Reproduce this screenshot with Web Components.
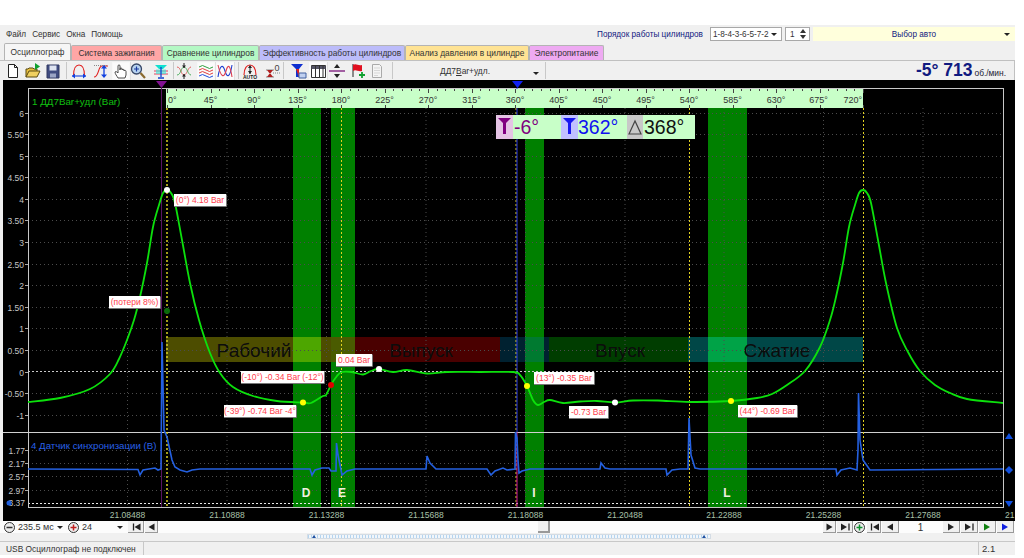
<!DOCTYPE html>
<html>
<head>
<meta charset="utf-8">
<style>
  html, body { margin: 0; padding: 0; background: #fff; }
  body { font: 8.5px "Liberation Sans", Arial, sans-serif; color: #222; overflow: hidden; }
</style>
</head>
<body>
<osc-app>
  <osc-header></osc-header>
  <osc-tabs>
    <osc-tab w="67" color="#f6f6f6" active>Осциллограф</osc-tab>
    <osc-tab w="91" color="#ffa6a6">Система зажигания</osc-tab>
    <osc-tab w="97" color="#b4f8c4">Сравнение цилиндров</osc-tab>
    <osc-tab w="146" color="#bcbcfa">Эффективность работы цилиндров</osc-tab>
    <osc-tab w="124" color="#ffe394">Анализ давления в цилиндре</osc-tab>
    <osc-tab w="75" color="#eeaaf2">Электропитание</osc-tab>
  </osc-tabs>
  <osc-toolbar>
    <osc-tool icon="new"></osc-tool>
    <osc-tool icon="open" gap="4"></osc-tool>
    <osc-tool icon="save" gap="4"></osc-tool>
    <osc-sep gap="5"></osc-sep>
    <osc-tool icon="arc" gap="4"></osc-tool>
    <osc-tool icon="slope" gap="6"></osc-tool>
    <osc-tool icon="hand" gap="4" pressed></osc-tool>
    <osc-tool icon="zoom" gap="1"></osc-tool>
    <osc-tool icon="cyan" gap="7"></osc-tool>
    <osc-sep gap="4"></osc-sep>
    <osc-tool icon="cross" gap="2"></osc-tool>
    <osc-tool icon="waves" gap="6" pressed></osc-tool>
    <osc-tool icon="loops" gap="3" pressed></osc-tool>
    <osc-sep gap="5"></osc-sep>
    <osc-tool icon="auto" gap="3"></osc-tool>
    <osc-tool icon="zero" gap="5"></osc-tool>
    <osc-sep gap="4"></osc-sep>
    <osc-tool icon="filter" gap="6"></osc-tool>
    <osc-tool icon="table" gap="4" pressed></osc-tool>
    <osc-tool icon="split" gap="3"></osc-tool>
    <osc-tool icon="flag" gap="4"></osc-tool>
    <osc-tool icon="doc" gap="4"></osc-tool>
    <osc-sep gap="7"></osc-sep>
    <osc-signal-select></osc-signal-select>
    <osc-sep></osc-sep>
    <osc-rpm></osc-rpm>
  </osc-toolbar>
  <osc-chart></osc-chart>
  <osc-transport></osc-transport>
  <osc-scrollbar></osc-scrollbar>
  <osc-status></osc-status>
</osc-app>

<script>
function shadow(el, html) {
  el.attachShadow({ mode: 'open' });
  const t = document.createElement('template');
  t.innerHTML = html;
  el.shadowRoot.appendChild(t.content.cloneNode(true));
}

const ICONS = {
  new: '<path d="M3.500 1.500h6l3 3v10h-9z" fill="#fff" stroke="#222"/><path d="M9.500 1.500v3h3" fill="none" stroke="#222"/>',
  open: '<path d="M1 14V6h2l1-1h4l1 1h3v2" fill="#e8c040" stroke="#5a4a10"/><path d="M1 14l3-6h11l-3 6z" fill="#f0d060" stroke="#5a4a10"/><path d="M10 0l5 3.500-5 3.500z" fill="#10a030"/>',
  save: '<path d="M2 2h12v13H2z" fill="#404c80" stroke="#303860"/><path d="M4.500 2.500h7v5h-7z" fill="#dfe4f0"/><path d="M5 10.500h6v4H5z" fill="#9aa4c4"/>',
  arc: '<path d="M2.500 13C2.500 5 5 2 8 2s5.500 3 5.500 11" fill="none" stroke="#e02020" stroke-width="1.100"/><path d="M1 13h14" stroke="#1040e0" stroke-width="1.100"/><path d="M1 13l3-2.500v5zM15 13l-3-2.500v5z" fill="#1040e0"/>',
  slope: '<path d="M1 14c5 0 4-11 8-11h6" fill="none" stroke="#e02020" stroke-width="1.100"/><path d="M1 2.500h14" stroke="#888" stroke-dasharray="1 1"/><path d="M11 3v11" stroke="#1040e0" stroke-width="1.300"/><path d="M11 2l-3 3.500h6zM11 15l-3-3.500h6z" fill="#1040e0"/>',
  hand: '<path d="M5 15c-1-2-3-4-3-6 1-1 2 0 3 1V3c0-1.500 2-1.500 2 0v4-1c0-1.500 2-1.500 2 0v1c0-1 2-1 2 0v1c0-1 2-1 2 .5V12l-1 3z" fill="#fff" stroke="#222" stroke-width=".8"/>',
  zoom: '<circle cx="6.500" cy="6" r="5" fill="#b8d4f0" stroke="#384868" stroke-width="1.300"/><path d="M4 6h5M6.500 3.500v5" stroke="#1a3aa0" stroke-width="1.200"/><path d="M10.500 10l4.500 5" stroke="#8a6a30" stroke-width="2.200"/>',
  cyan: '<path d="M2 2h12l-4 4H6z" fill="#10e0d0"/><path d="M1 8h14M1 11h14" stroke="#e04060" stroke-width="1"/><path d="M3 6.500h10v4.500H3z" fill="#30e8d8" opacity=".6"/><path d="M8 4v10M5 15h6" stroke="#1040d0" stroke-width="1.300"/>',
  cross: '<path d="M1 4c4 0 4 8 7 8s4-8 7-8" fill="none" stroke="#e06060"/><path d="M1 12c4 0 4-8 7-8s4 8 7 8" fill="none" stroke="#50b060"/><path d="M8 0v5M8 11v5" stroke="#222"/><path d="M8 5L6 2.500h4zM8 11l-2 2.500h4z" fill="#222"/>',
  waves: '<path d="M1 4q3.500-3 7 0t7 0" fill="none" stroke="#30a040"/><path d="M1 7q3.500-3 7 0t7 0" fill="none" stroke="#e04040"/><path d="M1 10q3.500-3 7 0t7 0" fill="none" stroke="#e04040"/><path d="M1 13q3.500-3 7 0t7 0" fill="none" stroke="#2050e0"/>',
  loops: '<path d="M1 14C3 1 6 1 8 8s5 7 7-6" fill="none" stroke="#2040d0" stroke-width="1.100"/><path d="M1 2c3 13 6 13 8 6s4-7 6 6" fill="none" stroke="#e04050" stroke-width="1.100"/>',
  auto: '<path d="M2 12C2 5 5 2 8 2s6 3 6 10" fill="none" stroke="#e02020" stroke-width="1.100"/><path d="M8 3v8" stroke="#222"/><path d="M8 2L6 5h4zM8 11L6 8h4z" fill="#222"/><text x="8" y="16" font-size="5" font-weight="700" text-anchor="middle" font-family="Liberation Sans" fill="#222">AUTO</text>',
  zero: '<path d="M3 7h8M3 14h8" stroke="#888"/><path d="M7 11L4 7h6zM7 10l-3 4h6z" fill="#b02020"/><text x="14" y="8" font-size="9" text-anchor="middle" font-family="Liberation Sans" fill="#444">0</text><path d="M10 10h7" stroke="#888" stroke-dasharray="1 1"/>',
  filter: '<path d="M1 1h12L9 6v8H6V6z" fill="#1030d0"/><path d="M6 6h3v8z" fill="#e02020"/><path d="M9 10h7v5H9z" fill="#c0d0f0" stroke="#4060a0"/>',
  table: '<path d="M1.500 2.500h14v12h-14z" fill="#fff" stroke="#333"/><path d="M1.500 3h14v3h-14z" fill="#556"/><path d="M5.500 3v11M9.500 3v11M13 3v11" stroke="#333"/>',
  split: '<path d="M0 8h16" stroke="#802080" stroke-width="1.400"/><path d="M8 1l-3 4h6zM8 15l-3-4h6z" fill="#222"/>',
  flag: '<path d="M4 1v13" stroke="#222"/><path d="M4 2c3-2 5 1 9 0v6c-4 1-6-2-9 0z" fill="#e01020"/><path d="M10 12h6M13 9v6" stroke="#10a030" stroke-width="1.800"/>',
  doc: '<path d="M3.500 1.500h7l2 2v11h-9z" fill="#f4f4f4" stroke="#aaa"/><path d="M5.500 5h5M5.500 7.500h5M5.500 10h5M5.500 12.500h3" stroke="#bbb" stroke-dasharray="1 1"/>'
};

class OscApp extends HTMLElement {
  constructor() {
    super();
    shadow(this, `<style>
      :host { display: block; width: 1015px; margin-top: 25px; background: #f0f0f0; }
    </style><slot></slot>`);
  }
}

class OscHeader extends HTMLElement {
  constructor() {
    super();
    shadow(this, `<style>
      :host { display: flex; align-items: center; height: 18px; font: 8.2px "Liberation Sans", Arial, sans-serif; color: #333; white-space: nowrap; }
      .menu { display: flex; gap: 6px; padding-left: 6px; width: 597px; box-sizing: border-box; }
      .order { color: #101a80; width: 113px; }
      .box { display: flex; align-items: center; justify-content: space-between; height: 14px; box-sizing: border-box; background: #fff; border: 1px solid #a8a8a8; padding: 0 2px; }
      .cyl { width: 72px; margin-right: 3px; padding-right: 4px; }
      .spin { width: 25px; margin-right: 3px; padding: 0 3px 0 4px; }
      .auto { flex: 1; background: #ffffdc; border: 0; color: #101a80; position: relative; justify-content: center; }
      .arrow { width: 0; height: 0; border: 3px solid transparent; border-top: 3px solid #222; border-bottom: 0; }
      .auto .arrow { position: absolute; right: 5px; top: 6px; }
      .updown { display: flex; flex-direction: column; gap: 2px; }
      .up { width: 0; height: 0; border: 3px solid transparent; border-bottom: 4px solid #333; border-top: 0; }
      .dn { width: 0; height: 0; border: 3px solid transparent; border-top: 4px solid #333; border-bottom: 0; }
    </style>
    <div class="menu"><span>Файл</span><span>Сервис</span><span>Окна</span><span>Помощь</span></div>
    <span class="order">Порядок работы цилиндров</span>
    <div class="box cyl"><span>1-8-4-3-6-5-7-2</span><i class="arrow"></i></div>
    <div class="box spin"><span>1</span><div class="updown"><i class="up"></i><i class="dn"></i></div></div>
    <div class="box auto"><span>Выбор авто</span><i class="arrow"></i></div>`);
  }
}

class OscTabs extends HTMLElement {
  constructor() {
    super();
    shadow(this, `<style>
      :host { display: flex; height: 17px; padding-left: 4px; box-sizing: border-box; align-items: flex-end; }
    </style><slot></slot>`);
  }
}

class OscTab extends HTMLElement {
  constructor() {
    super();
    const on = this.hasAttribute('active');
    shadow(this, `<style>
      :host { display: flex; align-items: center; justify-content: center; box-sizing: border-box;
        width: ${this.getAttribute('w')}px; height: ${on ? 17 : 15}px; background: ${this.getAttribute('color')};
        border: 1px solid #b4b4b4; border-bottom: 0; border-radius: 2px 2px 0 0;
        font: 8.4px "Liberation Sans", Arial, sans-serif; color: #333; white-space: nowrap; }
    </style><slot></slot>`);
  }
}

class OscToolbar extends HTMLElement {
  constructor() {
    super();
    shadow(this, `<style>
      :host { display: flex; align-items: center; height: 20px; box-sizing: border-box; padding-left: 5px;
        background: #f0f0f0; border-top: 1px solid #c0c0c0; border-right: 1px solid #c0c0c0; }
    </style><slot></slot>`);
  }
}

class OscTool extends HTMLElement {
  constructor() {
    super();
    const gap = this.getAttribute('gap') || 0;
    const bg = this.hasAttribute('pressed') ? 'background: #fbfbfb; box-shadow: 0 0 0 1px #f8f8f8, 1px 0 0 1px #e0e0e0;' : '';
    shadow(this, `<style>
      :host { display: block; width: 16px; height: 16px; margin-left: ${gap}px; ${bg} }
      svg { display: block; overflow: visible; }
    </style><svg width="16" height="16" viewBox="0 0 16 16">${ICONS[this.getAttribute('icon')]}</svg>`);
  }
}

class OscSep extends HTMLElement {
  constructor() {
    super();
    shadow(this, `<style>
      :host { display: block; width: 1px; height: 17px; background: #c8c8c8; margin-left: ${this.getAttribute('gap') || 0}px; }
    </style>`);
  }
}

class OscSignalSelect extends HTMLElement {
  constructor() {
    super();
    shadow(this, `<style>
      :host { display: flex; align-items: center; width: 152px; position: relative; justify-content: center;
        font: 8.4px "Liberation Sans", Arial, sans-serif; color: #333; padding-right: 8px; box-sizing: border-box; white-space: nowrap; }
      i { position: absolute; right: 6px; top: 6px; width: 0; height: 0; border: 3px solid transparent; border-top: 3px solid #222; border-bottom: 0; }
    </style><span>ДД7<u>B</u>ar+удл.</span><i></i>`);
  }
}

class OscRpm extends HTMLElement {
  constructor() {
    super();
    shadow(this, `<style>
      :host { display: flex; flex: 1; align-items: baseline; justify-content: flex-end; padding-right: 8px;
        font: 700 17.500px "Liberation Sans", Arial, sans-serif; color: #101a80; line-height: 19px; white-space: nowrap; }
      small { font: 8.4px "Liberation Sans", Arial, sans-serif; color: #223; margin-left: 2px; }
    </style><span>-5° 713</span><small>об./мин.</small>`);
  }
}

// smooth path through points (catmull-rom to bezier)
function smooth(p) {
  let d = `M${p[0][0]} ${p[0][1]}`;
  for (let i = 0; i < p.length - 1; i++) {
    const a = p[i - 1] || p[i], b = p[i], c = p[i + 1], e = p[i + 2] || c;
    const c1 = [b[0] + (c[0] - a[0]) / 6, b[1] + (c[1] - a[1]) / 6];
    const c2 = [c[0] - (e[0] - b[0]) / 6, c[1] - (e[1] - b[1]) / 6];
    d += `C${c1[0].toFixed(1)} ${c1[1].toFixed(1)} ${c2[0].toFixed(1)} ${c2[1].toFixed(1)} ${c[0]} ${c[1]}`;
  }
  return d;
}

const PRESSURE = [[28,402],[60,398],[90,389],[110,374],[119,359],[127,340],[134,320],[140,297],[147,263],[153,227],[159,205],[163,193],[167,190],[171,193],[175,203],[182,240],[190,283],[199,320],[210,353],[220,373],[233,387],[253,396],[277,401],[303,402.5],[311,403],[323,396],[326,395],[331,385],[337,376],[342,372],[352,372],[363,374.5],[371,371],[379,369],[393,372],[407,370],[427,373.5],[447,372],[480,372],[513,372],[520,375],[527,386],[533,400],[538,405],[544,402],[550,400],[563,403],[580,401.5],[597,401],[615,402.5],[633,400.5],[658,400.5],[690,402],[731,401],[757,398],[772,394],[787,385],[805,371],[820,347],[830,320],[836,297],[843,263],[849,227],[855,205],[859,193],[863,190],[867,193],[871,203],[878,240],[886,283],[897,328],[908,352],[920,371],[935,385],[950,393],[967,399],[1003,403]];

const SYNC = [[28,469],[138,469.5],[140,475],[143,470],[155,468],[158,470],[161,469],[162,342],[163,385],[164,430],[167,437],[172,460],[175,467],[180,470],[187,472],[192,470],[200,469],[310,469],[312,475],[315,470],[322,468],[326,468],[329,468],[331,471],[336,471],[336.5,443],[338,455],[342,475],[347,471],[355,469],[426,469],[427,456],[430,463],[436,469],[487,469],[491,475],[495,471],[503,468],[507,470],[515,469],[515.5,432],[517,438],[518,460],[519,473],[522,471],[530,469],[600,469],[601,463],[605,468],[610,469],[666,469],[667,475],[672,470],[680,469],[688,469],[689,418],[691,455],[695,468],[700,469],[836,469],[837,475],[841,470],[850,468],[857,470],[858,450],[858.5,393],[860,440],[863,460],[870,470],[1003,469]];

const GRID_X = [127.5, 227, 326.5, 426, 525.5, 625, 724, 823.5, 923];
const TIMES = ['21.08488','21.10888','21.13288','21.15688','21.18088','21.20488','21.22888','21.25288','21.27688'];
const GRID_C = '#4c4c4c';

class OscChart extends HTMLElement {
  constructor() {
    super();
    let s = '';
    // green cylinder bars
    [[293,28],[331,24],[525,19],[708,39]].forEach(([x, w]) => {
      s += `<rect x="${x}" y="108" width="${w}" height="399" fill="#008000"/>`;
    });
    // stroke bands
    [[166,165,'rgba(255,255,0,.3)'],[331,169,'rgba(255,0,0,.29)'],[500,49,'rgba(0,110,160,.3)'],[549,139,'rgba(0,255,0,.24)'],[688,175,'rgba(0,255,255,.28)']].forEach(([x, w, c]) => {
      s += `<rect x="${x}" y="337" width="${w}" height="25" fill="${c}"/>`;
    });
    [['Рабочий',254],['Выпуск',421],['Впуск',620],['Сжатие',777]].forEach(([t, x]) => {
      s += `<text x="${x}" y="357" font-size="19" text-anchor="middle" fill="#0c0c0c">${t}</text>`;
    });
    // grid
    GRID_X.forEach(x => { s += `<path d="M${x} 108V507" stroke="${GRID_C}" stroke-dasharray="1 3"/>`; });
    const axis = ['6','5.50','5','4.50','4','3.50','3','2.50','2','1.50','1','0.50','0','-0.50','-1'];
    axis.forEach(v => {
      const y = Math.round(371.5 - 43.15 * parseFloat(v)) + .5;
      if (v !== '0') s += `<path d="M28 ${y}H1003" stroke="${GRID_C}" stroke-dasharray="1 3"/>`;
      s += `<path d="M25 ${y}h3" stroke="#aaa"/><text x="24" y="${y + 3}" font-size="8.5" text-anchor="end" fill="#c4c4c4">${v}</text>`;
    });
    [['1.77',450.5],['2.17',463.5],['2.57',476.5],['2.97',490.5]].forEach(([v, y]) => {
      s += `<path d="M28 ${y}H1003" stroke="${GRID_C}" stroke-dasharray="1 3"/>`;
      s += `<path d="M25 ${y}h3" stroke="#aaa"/><text x="25" y="${y + 3}" font-size="8.5" text-anchor="end" fill="#c4c4c4">${v}</text>`;
    });
    s += `<text x="25" y="506" font-size="8.5" text-anchor="end" fill="#c4c4c4">3.37</text><circle cx="9" cy="503" r="2.5" fill="#2060e0"/>`;
    s += `<path d="M28 371.5H1003" stroke="#c8c8c8" stroke-width="1.2" stroke-dasharray="2 2"/>`;
    s += `<path d="M28 503.5H1003" stroke="#e8e8e8" stroke-dasharray="2 2"/>`;
    // frame
    s += `<rect x="28.5" y="88.5" width="975" height="419" fill="none" stroke="#c8c8c8"/><path d="M3 432.5H1003" stroke="#d0d0d0"/>`;
    // cursors
    [341.5, 516, 689.5, 863.5].forEach(x => { s += `<path d="M${x} 108V507" stroke="#e0d020" stroke-dasharray="2 2"/>`; });
    s += `<path d="M167 108V507" stroke="#d8d020" stroke-width="1.5" stroke-dasharray="2 2"/>`;
    s += `<path d="M161.5 88V507" stroke="#5a1460"/>`;
    s += `<path d="M517 88V432" stroke="#2838e0"/><path d="M517 432V507" stroke="#d01898"/>`;
    s += `<path d="M156 81h11l-5.5 7z" fill="#801090"/><path d="M512 81h11l-5.5 7z" fill="#1020f0"/>`;
    // curves
    s += `<path d="${smooth(PRESSURE)}" fill="none" stroke="#0ce00c" stroke-width="1.8"/>`;
    s += `<path d="M${SYNC.map(p => p.join(' ')).join('L')}" fill="none" stroke="#2460e0" stroke-width="1.6"/>`;
    // ruler
    s += `<rect x="166" y="89" width="697" height="19" fill="#c8ffc8"/>`;
    for (let d = 0; d <= 720; d += 9) {
      const x = Math.round(167 + d * .9667) + .5;
      const big = d % 45 === 0;
      s += `<path d="M${x} 89v${big ? 4 : 2}" stroke="#444"/>`;
      if (big) s += `<path d="M${x} 105v3" stroke="#444"/>`;
    }
    for (let d = 0; d <= 720; d += 45) {
      const x = 167 + d * .9667;
      const anchor = d === 0 ? 'start' : d === 720 ? 'end' : 'middle';
      const tx = d === 0 ? 168 : d === 720 ? 862 : d === 675 ? x - 1 : x;
      s += `<text x="${tx}" y="103" font-size="9" text-anchor="${anchor}" fill="#333">${d}°</text>`;
    }
    // readout
    s += `<rect x="496" y="115" width="199" height="24" fill="#c8ffc8"/>`;
    s += `<rect x="496" y="115" width="17" height="24" fill="#e4c4e4"/><rect x="561" y="115" width="17" height="24" fill="#c0c0ff"/><rect x="627" y="115" width="16" height="24" fill="#c8c8c8"/>`;
    s += `<path d="M498 118h13l-5 5v11h-3v-11z" fill="#800080"/><path d="M563 118h13l-5 5v11h-3v-11z" fill="#1818f0"/><path d="M629 134l6-13 6 13z" fill="none" stroke="#444" stroke-width="1.2"/>`;
    s += `<text x="514" y="134" font-size="19.5" fill="#800080">-6°</text><text x="578" y="134" font-size="19.5" fill="#1010f0">362°</text><text x="644" y="134" font-size="19.5" fill="#111">368°</text>`;
    // callouts
    [[174,194,52,12,'(0°) 4.18 Bar'],[109,296,51,12,'(потери 8%)'],[241,371,83,12,'(-10°) -0.34 Bar (-12°)'],[224,405,72,12,'(-39°) -0.74 Bar -4°'],[336,354,36,12,'0.04 Bar'],[534,372,60,12,'(13°) -0.35 Bar'],[569,406,39,12,'-0.73 Bar'],[738,405,59,12,'(44°) -0.69 Bar']].forEach(([x, y, w, h, t]) => {
      s += `<rect x="${x}" y="${y}" width="${w}" height="${h}" fill="#fff"/><path d="M${x} ${y + h + .5}h${w + .5}v${-h}" fill="none" stroke="#777"/>`;
      s += `<text x="${x + w / 2}" y="${y + 9}" font-size="8.5" text-anchor="middle" fill="#ff3c4c">${t}</text>`;
    });
    // dots
    [[167,190,'#fff'],[167,311,'#0a6a0a'],[303,402.5,'#ffff00'],[331,385,'#e00000'],[379,369,'#fff'],[527,386,'#ffff00'],[615,402.5,'#fff'],[731,401,'#ffff00']].forEach(([x, y, c]) => {
      s += `<circle cx="${x}" cy="${y}" r="3" fill="${c}"/>`;
    });
    // letters, channel names, time scale
    [['D',306],['E',342],['I',534],['L',727]].forEach(([t, x]) => {
      s += `<text x="${x}" y="497" font-size="12" font-weight="700" text-anchor="middle" fill="#f0f0e0">${t}</text>`;
    });
    s += `<text x="32" y="105" font-size="9.8" fill="#10c010">1 ДД7Bar+удл (Bar)</text>`;
    s += `<text x="31" y="449" font-size="9.7" fill="#2860e8">4 Датчик синхронизации (В)</text>`;
    TIMES.forEach((t, i) => { s += `<text x="${GRID_X[i]}" y="518" font-size="8.5" text-anchor="middle" fill="#a8c0a8">${t}</text>`; });
    s += `<text x="1005" y="518" font-size="8.5" fill="#a8c0a8">21</text>`;
    // right scale handles
    s += `<path d="M1009 433l-4 6h8zM1005 470l4-4 4 4-4 4zM1005 501h8l-4 6z" fill="#1050e0"/>`;

    shadow(this, `<style>
      :host { display: block; height: 441px; margin-left: 3px; background: #000; }
      svg { display: block; font-family: "Liberation Sans", Arial, sans-serif; }
    </style><svg width="1012" height="441" viewBox="3 80 1012 441">${s}</svg>`);
  }
}

class OscTransport extends HTMLElement {
  constructor() {
    super();
    const btn = (w, inner) => `<span class="btn" style="width:${w}px"><svg width="${w}" height="12" viewBox="0 0 ${w} 12">${inner}</svg></span>`;
    const tri = (x, dir, col = '#222') => dir > 0
      ? `<path d="M${x - 3} 2.500l6 3.500-6 3.500z" fill="${col}"/>`
      : `<path d="M${x + 3} 2.500l-6 3.500 6 3.500z" fill="${col}"/>`;
    const bar = x => `<path d="M${x} 2.500v7" stroke="#222" stroke-width="1.300"/>`;
    const round = (mark, col) => `<svg width="13" height="13" viewBox="0 0 13 13"><circle cx="6.500" cy="6.500" r="5" fill="#eee" stroke="#333"/><path d="${mark}" stroke="${col}" stroke-width="1.500"/></svg>`;
    shadow(this, `<style>
      :host { display: grid; grid-template-columns: 157px 378px 12px 1fr; height: 12px; padding-left: 3px; background: #fcfcfc; font: 9px "Liberation Sans", Arial, sans-serif; color: #333; white-space: nowrap; }
      .l, .r { display: flex; align-items: center; height: 12px; }
      .r { justify-content: flex-end; padding-right: 1px; }
      .btn { display: block; height: 12px; background: #f0f0f0; border-right: 1px solid #999; border-bottom: 1px solid #999; box-sizing: border-box; margin-left: 1px; overflow: hidden; }
      svg { display: block; flex: none; }
      .val { width: 39px; margin-left: 2px; }
      .val.b { width: 35px; }
      i { width: 0; height: 0; border: 3px solid transparent; border-top: 3px solid #222; border-bottom: 0; margin-top: 1px; margin-right: 4px; }
      .thumb { background: #f0f0f0; border-right: 2px solid #999; border-bottom: 2px solid #999; box-sizing: border-box; }
      .page { width: 43px; text-align: center; font-size: 10px; }
    </style>
    <div class="l">
      ${round('M3.500 6.500h6', '#333')}
      <span class="val">235.5 мс</span><i></i>
      ${round('M3.500 6.500h6M6.500 3.500V9.500', '#c02020')}
      <span class="val b">24</span><i></i>
      ${btn(16, bar(5.5) + tri(9.5, -1))}
      ${btn(13, tri(6.5, -1))}
    </div>
    <div></div>
    <div class="thumb"></div>
    <div class="r">
      ${btn(13, tri(6.5, 1))}
      ${btn(16, tri(7, 1) + bar(12))}
      ${round('M3.500 6.500h6M6.500 3.500v6', '#109030')}
      ${btn(14, bar(4.5) + tri(9, -1))}
      ${btn(17, tri(8, -1))}
      <span class="page">1</span>
      ${btn(17, tri(8, 1))}
      ${btn(17, tri(7, 1) + bar(12))}
      ${btn(17, tri(8, 1, '#108010'))}
      ${btn(17, tri(8, 1, '#1020e0'))}
    </div>`);
  }
}

class OscScrollbar extends HTMLElement {
  constructor() {
    super();
    shadow(this, `<style>
      :host { display: block; height: 9px; padding: 1px 0 2px 307px; box-sizing: border-box; background: #f0f0f0; border-bottom: 1px solid #c8c8c8; }
      div { position: relative; width: 404px; height: 5px; box-sizing: border-box; border: 1px solid #d4dce4;
        background: repeating-linear-gradient(90deg, #b4d4f0 0 1px, #f2f6fa 1px 3px); }
      i { position: absolute; top: 0; width: 0; height: 0; border: 2px solid transparent; border-bottom: 3px solid #2050a0; border-top: 0; }
      i.a { left: 4px; } i.b { right: 4px; }
    </style><div><i class="a"></i><i class="b"></i></div>`);
  }
}

class OscStatus extends HTMLElement {
  constructor() {
    super();
    shadow(this, `<style>
      :host { display: grid; grid-template-columns: 144px 1fr 36px; height: 13px; background: #f0f0f0; font: 8.4px "Liberation Sans", Arial, sans-serif; color: #333; white-space: nowrap; }
      span { display: flex; align-items: center; padding-left: 6px; border-right: 1px solid #c8c8c8; box-sizing: border-box; }
      span + span + span { border: 0; padding-left: 3px; font-size: 9.5px; }
    </style><span>USB Осциллограф не подключен</span><span></span><span>2.1</span>`);
  }
}

customElements.define('osc-app', OscApp);
customElements.define('osc-header', OscHeader);
customElements.define('osc-tabs', OscTabs);
customElements.define('osc-tab', OscTab);
customElements.define('osc-toolbar', OscToolbar);
customElements.define('osc-tool', OscTool);
customElements.define('osc-sep', OscSep);
customElements.define('osc-signal-select', OscSignalSelect);
customElements.define('osc-rpm', OscRpm);
customElements.define('osc-chart', OscChart);
customElements.define('osc-transport', OscTransport);
customElements.define('osc-scrollbar', OscScrollbar);
customElements.define('osc-status', OscStatus);
</script>
</body>
</html>
